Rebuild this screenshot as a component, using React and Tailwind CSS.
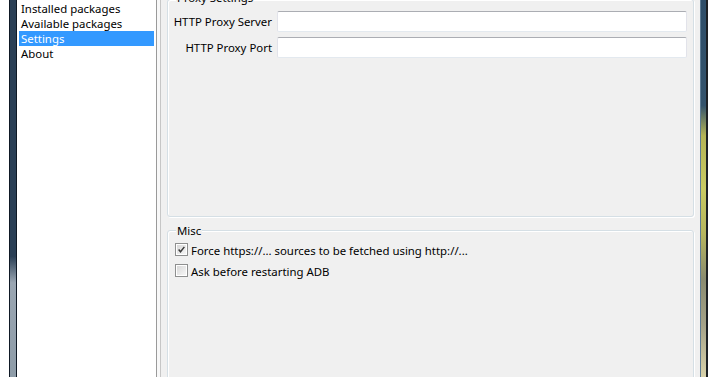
import React from "react";

const packages = ["Installed packages", "Available packages", "Settings", "About"];

function Field() {
  return (
    <div className="h-[21px] bg-white border border-[#e2e3ea] border-t-[#abadb3] border-b-[#e3e9ef] rounded-[2px]" />
  );
}

function CheckBox({ checked }) {
  return (
    <div className="w-[13px] h-[13px] border border-[#8e8f8f] bg-white p-px shrink-0">
      <div className="w-full h-full bg-linear-to-br from-[#d8d8d8] to-[#f6f6f6] flex items-center justify-center">
        {checked && (
          <svg width="11" height="11" viewBox="0 0 11 11">
            <path d="M2 5.5 L4.3 8.3 L9 2.3" fill="none" stroke="#3a3a3a" strokeWidth="1.8" />
          </svg>
        )}
      </div>
    </div>
  );
}

export default function App() {
  return (
    <div className="w-[718px] h-[377px] overflow-hidden flex bg-white text-black text-[11.4px] font-['Noto_Sans',sans-serif]">
      {/* left window frame */}
      <div className="w-[9px] shrink-0 bg-white" />
      <div className="w-[8px] shrink-0 border-x border-[#0f1925] bg-[linear-gradient(to_bottom,#2a3f55_0%,#2a3f55_68%,#9aa6b2_75%,#8e9ca8_100%)]" />

      {/* package list */}
      <div className="w-[140px] shrink-0 bg-white border-r border-[#9a9a9a] pt-px px-[2px]">
        {packages.map((p) => (
          <div
            key={p}
            className={
              p === "Settings"
                ? "h-[15px] leading-[15px] pl-[2px] bg-[#3399ff] text-white"
                : "h-[15px] leading-[15px] pl-[2px]"
            }
          >
            {p}
          </div>
        ))}
      </div>
      <div className="w-[3px] shrink-0 bg-[#f8f8f8]" />
      <div className="w-px shrink-0 bg-[#c6c6c6]" />

      {/* settings panel */}
      <div className="flex-1 bg-[#f0f0f0] px-[6px] flex flex-col overflow-hidden">
        <div className="relative mt-[-1px] h-[218px] shrink-0 border border-[#d5dfe5] rounded-[3px] shadow-[inset_1px_1px_0_#ffffff,1px_1px_0_#ffffff]">
          <span className="absolute left-[8px] top-[-10px] px-px bg-[#f0f0f0] leading-[16px]">Proxy Settings</span>
          <div className="grid grid-cols-[109px_1fr] gap-y-[5px] pt-[11px] pr-[6px] items-center">
            <div className="text-right pr-[5px] leading-[16px]">HTTP Proxy Server</div>
            <Field />
            <div className="text-right pr-[5px] leading-[16px]">HTTP Proxy Port</div>
            <Field />
          </div>
        </div>

        <div className="relative mt-[13px] h-[200px] shrink-0 border border-[#d5dfe5] rounded-[3px] shadow-[inset_1px_1px_0_#ffffff,1px_1px_0_#ffffff]">
          <span className="absolute left-[8px] top-[-8px] px-px bg-[#f0f0f0] leading-[16px]">Misc</span>
          <div className="flex flex-col gap-[8px] pt-[12px] pl-[7px]">
            <label className="flex items-center gap-[3px] h-[13px]">
              <CheckBox checked />
              <span className="leading-[16px] pt-[2px]">Force https://... sources to be fetched using http://...</span>
            </label>
            <label className="flex items-center gap-[3px] h-[13px]">
              <CheckBox />
              <span className="leading-[16px] pt-[2px]">Ask before restarting ADB</span>
            </label>
          </div>
        </div>
      </div>

      {/* right window frame */}
      <div className="w-[8px] shrink-0 border-l border-[#5c7a92] border-r-2 border-r-[#1c2024] bg-[linear-gradient(to_bottom,#2e4e69_0%,#33536c_28%,#b4b456_36%,#c8ca62_50%,#b6b65e_62%,#8a8c70_74%,#a4a288_86%,#d8d2aa_100%)]" />
      <div className="w-[10px] shrink-0 bg-white" />
    </div>
  );
}
